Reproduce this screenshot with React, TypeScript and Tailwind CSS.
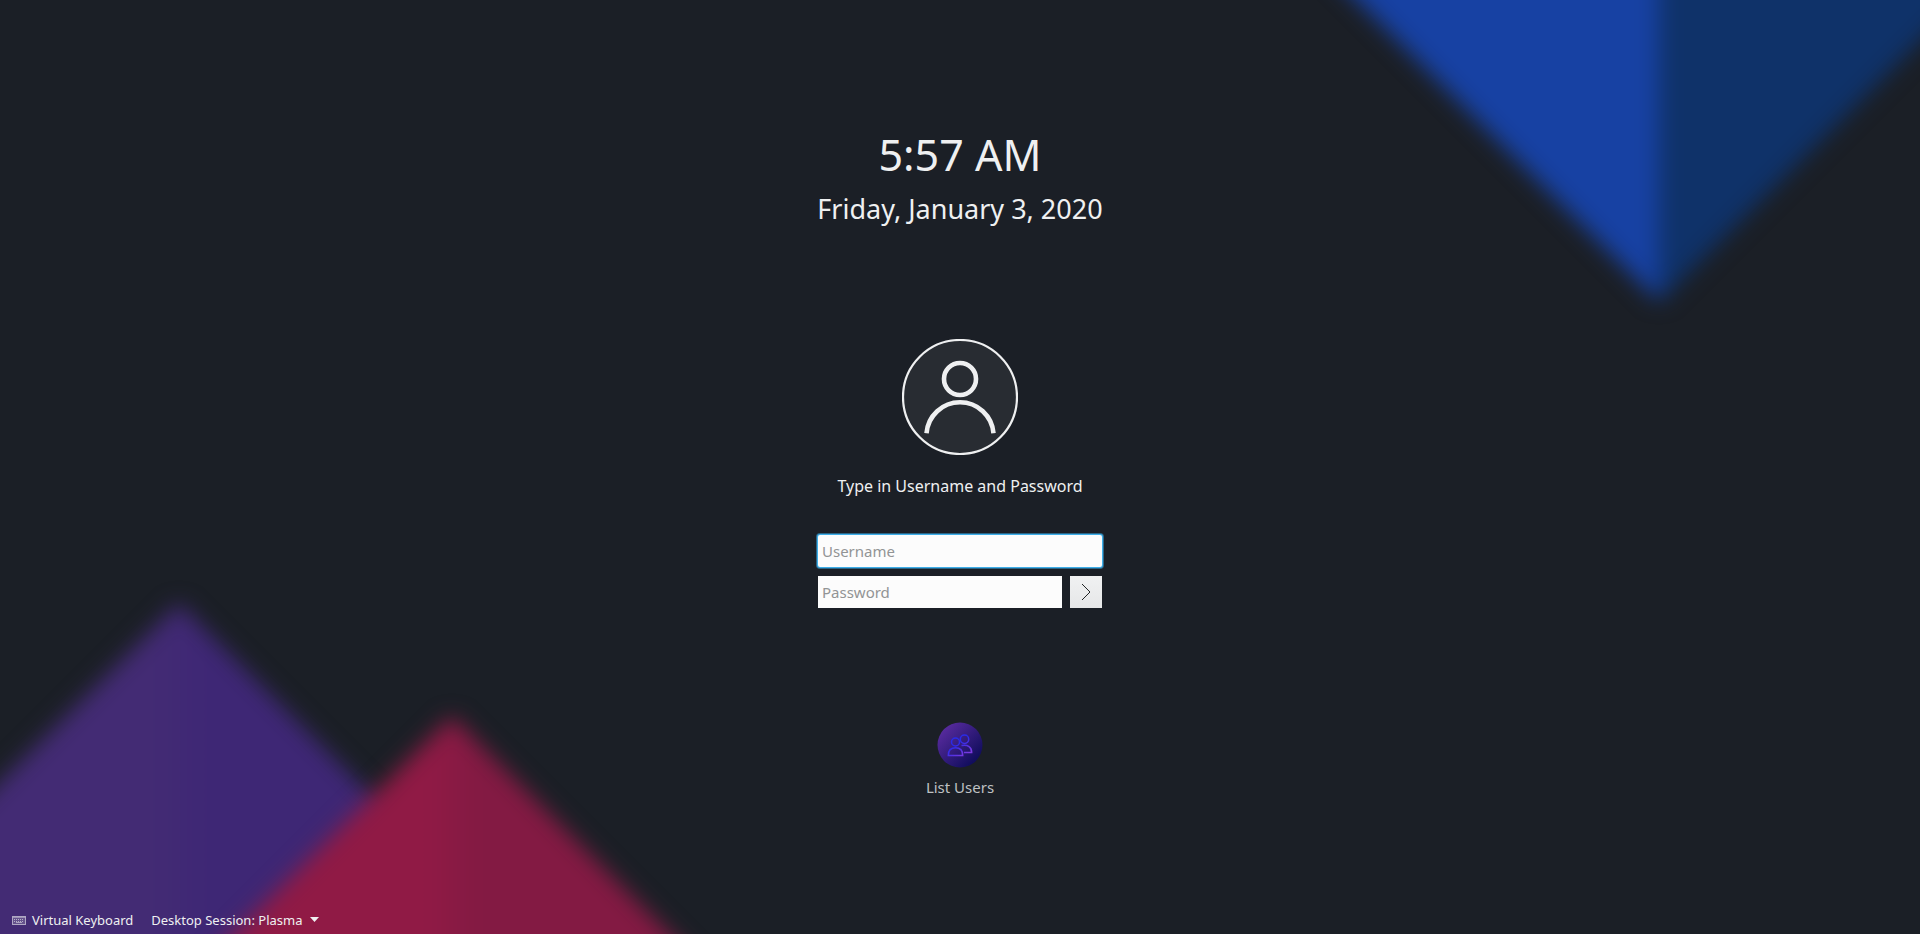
import { useState } from 'react'

function Wallpaper() {
  return (
    <svg
      className="absolute inset-0 w-full h-full"
      viewBox="0 0 1920 934"
      preserveAspectRatio="xMidYMid slice"
      aria-hidden="true"
    >
      <defs>
        <filter
          id="soft"
          filterUnits="userSpaceOnUse"
          x="-200"
          y="-200"
          width="2320"
          height="1334"
          colorInterpolationFilters="sRGB"
        >
          <feGaussianBlur stdDeviation="11" />
        </filter>
        <linearGradient id="purple" gradientUnits="userSpaceOnUse" x1="150" y1="0" x2="210" y2="0">
          <stop offset="0" stopColor="#432b74" />
          <stop offset="1" stopColor="#3e2775" />
        </linearGradient>
        <linearGradient id="red" gradientUnits="userSpaceOnUse" x1="430" y1="0" x2="476" y2="0">
          <stop offset="0" stopColor="#901a45" />
          <stop offset="1" stopColor="#831a43" />
        </linearGradient>
        <linearGradient id="blue" gradientUnits="userSpaceOnUse" x1="1654" y1="0" x2="1664" y2="0">
          <stop offset="0" stopColor="#1741a3" />
          <stop offset="1" stopColor="#0f3269" />
        </linearGradient>
      </defs>
      <path d="M179 603 L-318 1100 H676 Z" fill="url(#purple)" filter="url(#soft)" />
      <path d="M452 716 L68 1100 H836 Z" fill="url(#red)" filter="url(#soft)" />
      <path d="M1659 302 L1207 -150 H2111 Z" fill="url(#blue)" filter="url(#soft)" />
    </svg>
  )
}

function Avatar() {
  return (
    <svg width="116" height="116" viewBox="0 0 116 116" fill="none" stroke="#eff0f1" aria-hidden="true">
      <circle cx="58" cy="58" r="57" fill="#282c32" strokeWidth="2.2" />
      <circle cx="58" cy="40" r="16" strokeWidth="4.6" />
      <path d="M24.5 94.3 A33.6 33.6 0 0 1 91.5 94.3" strokeWidth="4.6" />
    </svg>
  )
}

function UsersIcon() {
  return (
    <svg width="46" height="46" viewBox="0 0 46 46" fill="none" aria-hidden="true">
      <defs>
        <linearGradient id="disc" x1="0" y1="0" x2="1" y2="1">
          <stop offset="0.1" stopColor="#5a2ca0" />
          <stop offset="0.9" stopColor="#0b0b57" />
        </linearGradient>
        <linearGradient id="people" gradientUnits="userSpaceOnUse" x1="16" y1="20" x2="26" y2="35">
          <stop offset="0.2" stopColor="#2a2ae8" />
          <stop offset="1" stopColor="#7d3ae0" />
        </linearGradient>
      </defs>
      <circle cx="23" cy="23" r="22.5" fill="url(#disc)" />
      <g stroke="url(#people)" strokeWidth="1.5">
        <circle cx="18.5" cy="20" r="4" />
        <circle cx="27.5" cy="17.3" r="4.2" />
        <path d="M11.3 33.4 C11.3 28 14 25.8 18.5 25.8 C23 25.8 25.7 28 25.7 33.4 Z" />
        <path d="M24.5 23.6 C31 22.5 34.7 25 34.7 30.4 H27" />
      </g>
    </svg>
  )
}

function KeyboardIcon() {
  return (
    <svg width="14" height="10" viewBox="0 0 14 10" stroke="#eff0f1" aria-hidden="true">
      <rect x="0.5" y="1.5" width="13" height="8" fill="#eff0f1" fillOpacity="0.2" strokeOpacity="0.6" />
      <path d="M1 2.5 H13" strokeOpacity="0.4" />
      <path d="M2 4.5 H12 M2 6.5 H12" strokeOpacity="0.6" strokeDasharray="1 1" />
      <path d="M4 7.5 H10" strokeOpacity="0.5" />
    </svg>
  )
}

export default function App() {
  const [username, setUsername] = useState('')
  const [password, setPassword] = useState('')

  return (
    <div className="relative flex flex-col min-h-screen overflow-hidden bg-[#1b1f26] text-[#eff0f1] font-['Noto_Sans',sans-serif]">
      <Wallpaper />

      <main className="relative flex flex-1 flex-col items-center pt-[125px]">
        <time className="text-[43px] leading-[60px]">5:57 AM</time>
        <span className="mt-1 text-[27px] leading-[40px]">Friday, January 3, 2020</span>

        <div className="mt-[110px]">
          <Avatar />
        </div>
        <p className="mt-[19px] text-base leading-6">Type in Username and Password</p>

        <form className="mt-[37px] w-[284px]" onSubmit={e => e.preventDefault()}>
          <input
            type="text"
            aria-label="Username"
            placeholder="Username"
            value={username}
            onChange={e => setUsername(e.target.value)}
            className="block h-8 w-full px-1 rounded-xs bg-[#fcfcfc] text-[15px] text-[#232627] placeholder:text-[#929495] outline-none shadow-[0_0_0_1px_#3daee9,0_0_0_2px_#2a6688]"
          />
          <div className="mt-[9px] flex gap-2">
            <input
              type="password"
              aria-label="Password"
              placeholder="Password"
              value={password}
              onChange={e => setPassword(e.target.value)}
              className="h-8 min-w-0 flex-1 px-1 bg-[#fcfcfc] text-[15px] text-[#232627] placeholder:text-[#929495] outline-none"
            />
            <button
              type="submit"
              aria-label="Log in"
              className="flex h-8 w-8 items-center justify-center bg-linear-to-b from-[#f0f1f2] to-[#e6e7e8]"
            >
              <svg width="16" height="16" viewBox="0 0 16 16" fill="none" stroke="#232627" aria-hidden="true">
                <path d="M4 0 L12 8 L4 16" />
              </svg>
            </button>
          </div>
        </form>

        <button type="button" className="mt-[114px] flex flex-col items-center gap-[7px] text-[15px] leading-6 text-[#bfc1c3]">
          <UsersIcon />
          List Users
        </button>
      </main>

      <footer className="relative flex h-7 items-center pl-3 text-[13px] leading-5">
        <button type="button" className="flex items-center gap-[6px]">
          <KeyboardIcon />
          Virtual Keyboard
        </button>
        <div className="relative ml-[18px]">
          <select aria-label="Desktop session" className="appearance-none bg-transparent pr-4 outline-none">
            <option>Desktop Session: Plasma</option>
          </select>
          <svg className="pointer-events-none absolute right-0 top-[7px]" width="9" height="5" viewBox="0 0 9 5" aria-hidden="true">
            <path d="M0 0 H9 L4.5 5 Z" fill="#eff0f1" />
          </svg>
        </div>
      </footer>
    </div>
  )
}
